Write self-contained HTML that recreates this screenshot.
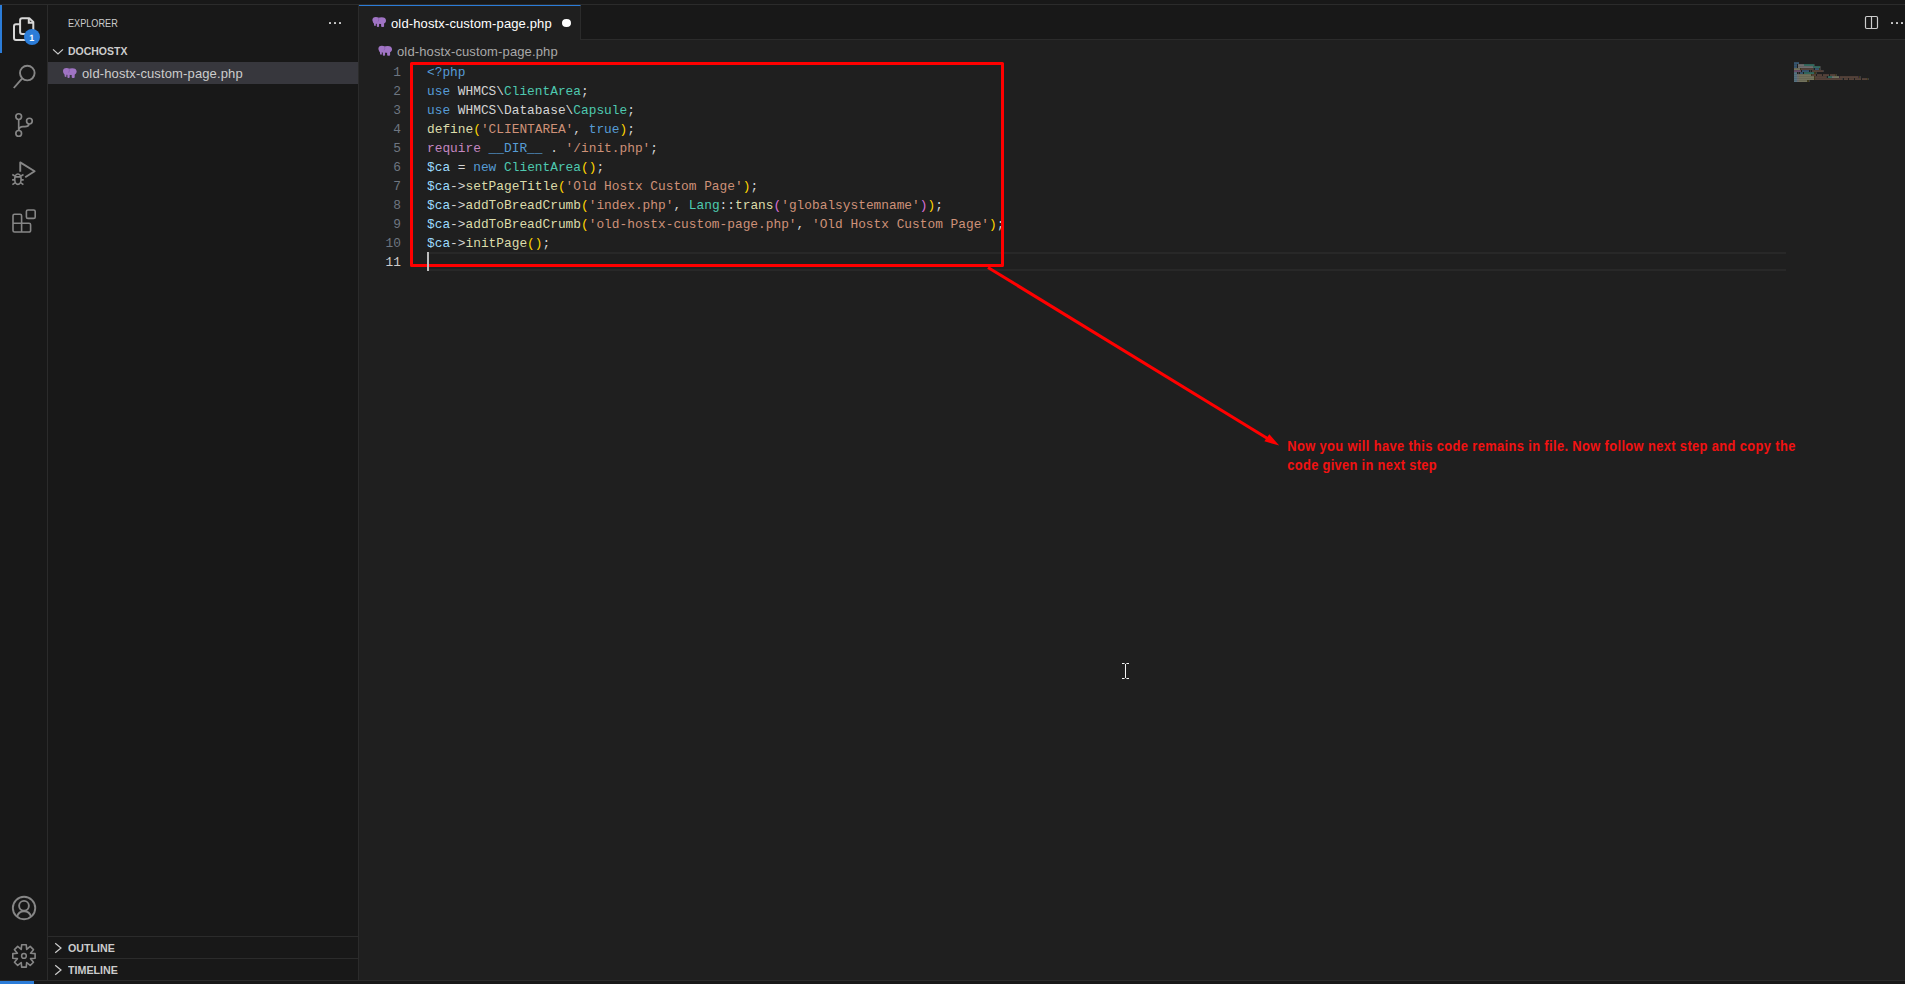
<!DOCTYPE html>
<html lang="en">
<head>
<meta charset="utf-8">
<title>old-hostx-custom-page.php - dochostx - Visual Studio Code</title>
<style>
*{box-sizing:border-box;margin:0;padding:0}
html,body{width:1905px;height:984px;overflow:hidden;background:#1f1f1f}
body{position:relative;font-family:"Liberation Sans",sans-serif;color:#ccc;font-size:13px;-webkit-font-smoothing:antialiased}
.abs{position:absolute}
#titlestrip{left:0;top:0;width:1905px;height:5px;background:#181818;border-bottom:1px solid #2b2b2b}
#activity{left:0;top:5px;width:48px;height:975px;background:#181818;border-right:1px solid #2b2b2b}
#activeind{left:0;top:5px;width:2px;height:48px;background:#2b7cd8}
#sidebar{left:48px;top:5px;width:311px;height:975px;background:#181818;border-right:1px solid #2b2b2b}
#tabbar{left:359px;top:5px;width:1546px;height:35px;background:#181818;border-bottom:1px solid #2b2b2b}
#tab{left:359px;top:5px;width:222px;height:35px;background:#1f1f1f;border-top:1px solid #2b7cd8;border-right:1px solid #2b2b2b}
#editor{left:359px;top:40px;width:1546px;height:940px;background:#1f1f1f}
#status{left:0;top:980px;width:1905px;height:4px;background:#181818;border-top:1px solid #2b2b2b}
#remote{left:0;top:981px;width:34px;height:3px;background:#2b7cd8}
.t{position:absolute;white-space:pre;line-height:1;transform-origin:0 0}
.ui13{font-size:13px;letter-spacing:0.13px}
.hdr{font-size:11px;color:#ccc}
.bold{font-weight:bold}
.ln{position:absolute;left:359px;width:42px;text-align:right;font-family:"Liberation Mono",monospace;font-size:12.83px;line-height:19px;height:19px;color:#6e7681}
.cl{position:absolute;left:427px;font-family:"Liberation Mono",monospace;font-size:12.83px;line-height:19px;height:19px;white-space:pre;color:#d4d4d4}
.k{color:#569cd6}.c{color:#c586c0}.ty{color:#4ec9b0}.f{color:#dcdcaa}.s{color:#ce9178}.v{color:#9cdcfe}.b1{color:#ffd700}.b2{color:#da70d6}
svg{position:absolute;overflow:visible}
</style>
</head>
<body>
<div class="abs" id="titlestrip"></div>
<div class="abs" id="activity"></div>
<div class="abs" id="activeind"></div>
<div class="abs" id="sidebar"></div>
<div class="abs" id="tabbar"></div>
<div class="abs" id="tab"></div>
<div class="abs" id="editor"></div>
<div class="abs" id="status"></div>
<div class="abs" id="remote"></div>


<!-- SIDEBAR CONTENT -->
<div class="t hdr" style="left:68px;top:17.7px;transform:scaleX(.83)">EXPLORER</div>
<div class="t hdr bold" style="left:68px;top:46.2px;transform:scaleX(.953)">DOCHOSTX</div>
<div class="abs" style="left:48px;top:62px;width:310px;height:22px;background:#37373d"></div>
<div class="t ui13" style="left:82px;top:67.2px;color:#ccc">old-hostx-custom-page.php</div>
<div class="abs" style="left:48px;top:936px;width:310px;height:1px;background:#2b2b2b"></div>
<div class="abs" style="left:48px;top:958px;width:310px;height:1px;background:#2b2b2b"></div>
<div class="t hdr bold" style="left:68px;top:942.7px;transform:scaleX(.969)">OUTLINE</div>
<div class="t hdr bold" style="left:68px;top:964.7px;transform:scaleX(.971)">TIMELINE</div>

<!-- TAB + BREADCRUMB -->
<div class="t ui13" style="left:391px;top:17px;color:#fff">old-hostx-custom-page.php</div>
<div class="abs" style="left:562px;top:18.7px;width:9px;height:8.5px;border-radius:50%;background:#fff"></div>
<div class="t ui13" style="left:397px;top:44.9px;color:#a9a9a9">old-hostx-custom-page.php</div>

<!-- CODE -->
<div id="code">
<div class="ln" style="top:62.8px">1</div><div class="cl" style="top:62.8px"><span class="k">&lt;?php</span></div>
<div class="ln" style="top:81.8px">2</div><div class="cl" style="top:81.8px"><span class="k">use</span> WHMCS\<span class="ty">ClientArea</span>;</div>
<div class="ln" style="top:100.8px">3</div><div class="cl" style="top:100.8px"><span class="k">use</span> WHMCS\Database\<span class="ty">Capsule</span>;</div>
<div class="ln" style="top:119.8px">4</div><div class="cl" style="top:119.8px"><span class="f">define</span><span class="b1">(</span><span class="s">'CLIENTAREA'</span>, <span class="k">true</span><span class="b1">)</span>;</div>
<div class="ln" style="top:138.8px">5</div><div class="cl" style="top:138.8px"><span class="c">require</span> <span class="k">__DIR__</span> . <span class="s">'/init.php'</span>;</div>
<div class="ln" style="top:157.8px">6</div><div class="cl" style="top:157.8px"><span class="v">$ca</span> = <span class="k">new</span> <span class="ty">ClientArea</span><span class="b1">()</span>;</div>
<div class="ln" style="top:176.8px">7</div><div class="cl" style="top:176.8px"><span class="v">$ca</span>-&gt;<span class="f">setPageTitle</span><span class="b1">(</span><span class="s">'Old Hostx Custom Page'</span><span class="b1">)</span>;</div>
<div class="ln" style="top:195.8px">8</div><div class="cl" style="top:195.8px"><span class="v">$ca</span>-&gt;<span class="f">addToBreadCrumb</span><span class="b1">(</span><span class="s">'index.php'</span>, <span class="ty">Lang</span>::<span class="f">trans</span><span class="b2">(</span><span class="s">'globalsystemname'</span><span class="b2">)</span><span class="b1">)</span>;</div>
<div class="ln" style="top:214.8px">9</div><div class="cl" style="top:214.8px"><span class="v">$ca</span>-&gt;<span class="f">addToBreadCrumb</span><span class="b1">(</span><span class="s">'old-hostx-custom-page.php'</span>, <span class="s">'Old Hostx Custom Page'</span><span class="b1">)</span>;</div>
<div class="ln" style="top:233.8px">10</div><div class="cl" style="top:233.8px"><span class="v">$ca</span>-&gt;<span class="f">initPage</span><span class="b1">()</span>;</div>
<div class="ln" style="top:252.8px;color:#ccc">11</div>
</div>
<div class="abs" style="left:427px;top:252px;width:1359px;height:19px;border-top:2px solid #282828;border-bottom:2px solid #282828"></div>

<!-- ANNOTATIONS -->
<svg id="anno" width="1905" height="984" style="left:0;top:0" viewBox="0 0 1905 984">
<rect x="411.5" y="63.5" width="591" height="202" fill="none" stroke="#ff0000" stroke-width="3" stroke-linejoin="round"/>
<line x1="988" y1="267.5" x2="1270" y2="440" stroke="#ff0000" stroke-width="3"/>
<polygon points="1279.2,445.6 1269.3,434.2 1264.4,441.3" fill="#ff0000"/>
<g transform="translate(1287.3,0) scale(0.92,1)" fill="#f21212" font-family="Liberation Sans, sans-serif" font-weight="bold" font-size="14">
<text x="0" y="451.2" textLength="552.2" lengthAdjust="spacing">Now you will have this code remains in file. Now follow next step and copy the</text>
<text x="0" y="470.2" textLength="162.3" lengthAdjust="spacing">code given in next step</text>
</g>
</svg>
<div class="abs" style="left:427px;top:252px;width:2px;height:19px;background:#bdbdbd"></div>
<!-- ACTIVITY BAR ICONS -->
<svg id="acticons" width="48" height="984" style="left:0;top:0" viewBox="0 0 48 984" fill="none" stroke-linecap="butt" stroke-linejoin="round">
<g stroke="#d7d7d7" stroke-width="2">
<path d="M22.1 18.2H29.3L33.3 21.9V31.9a2 2 0 0 1-2 2H22.1a2 2 0 0 1-2-2V20.2a2 2 0 0 1 2-2Z"/>
<path d="M28.8 18.2V22.8H33.3" stroke-linejoin="miter"/>
<path d="M20.1 24.2H16a2 2 0 0 0-2 2V37.9a2 2 0 0 0 2 2H28a2 2 0 0 0 2-2V34"/>
</g>
<circle cx="32" cy="37" r="8" fill="#2b7cd8" stroke="none"/>
<text x="31.8" y="40.6" text-anchor="middle" fill="#ffffff" stroke="none" font-family="Liberation Sans, sans-serif" font-weight="bold" font-size="9" text-rendering="geometricPrecision">1</text>
<g stroke="#868686" stroke-width="1.9">
<circle cx="27.3" cy="73.1" r="7.3"/>
<path d="M22 78.6L13.8 88"/>
<g stroke-width="1.65"><circle cx="18.7" cy="116.6" r="2.85"/>
<circle cx="18.7" cy="133.4" r="2.85"/>
<circle cx="29.4" cy="121.1" r="2.85"/>
<path d="M18.7 119.5V130.5M29 124C28.6 126.6 26.5 126.6 25 126.6H23C20.5 126.6 18.9 128 18.7 130.4"/></g>
<path d="M20.25 171.7V162.4L34.6 171.2L25.2 177.3" stroke-linejoin="round" stroke-width="1.9"/>
<g stroke-width="1.7">
<ellipse cx="17.9" cy="179.2" rx="3.2" ry="5.2"/>
<path d="M14.9 176.8H20.9M14.8 175.9L12.3 174.6M21 175.9L23.5 174.6M14.7 179.8H12.1M21.1 179.8H23.7M15.3 182.6L12.4 184.6M20.5 182.6L23.4 184.6"/>
</g>
<g stroke-width="1.6"><rect x="26.4" y="210" width="8.8" height="8.4" rx="1.5"/>
<path d="M13 215.8a1.5 1.5 0 0 1 1.5-1.5H20.1a1.5 1.5 0 0 1 1.5 1.5V223.2H29.1a1.5 1.5 0 0 1 1.5 1.5V230.5a1.5 1.5 0 0 1-1.5 1.5H14.5a1.5 1.5 0 0 1-1.5-1.5ZM13 223.2H21.6V232"/></g>
<circle cx="24.05" cy="908" r="11.2"/>
<circle cx="24" cy="905.8" r="4.9"/>
<path d="M17.1 916.6C18 913 21 911.2 24 911.2C27 911.2 30.1 913 31 916.6"/>
<path d="M21.23 949.39L21.65 944.80L26.25 944.80L26.67 949.39L30.21 946.44L33.46 949.69L30.51 953.23L35.10 953.65L35.10 958.25L30.51 958.67L33.46 962.21L30.21 965.46L26.67 962.51L26.25 967.10L21.65 967.10L21.23 962.51L17.69 965.46L14.44 962.21L17.39 958.67L12.80 958.25L12.80 953.65L17.39 953.23L14.44 949.69L17.69 946.44Z" stroke-width="1.6" stroke-linejoin="round"/>
<circle cx="23.95" cy="955.95" r="2.35" stroke-width="1.5"/>
</g>
</svg>

<!-- SMALL UI ICONS -->
<svg id="uiicons" width="1905" height="984" style="left:0;top:0" viewBox="0 0 1905 984" fill="none">
<g fill="#cccccc">
<rect x="329" y="22" width="2" height="2" rx=".5"/><rect x="334" y="22" width="2" height="2" rx=".5"/><rect x="339" y="22" width="2" height="2" rx=".5"/>
<rect x="1891" y="22" width="2" height="2" rx=".5"/><rect x="1896" y="22" width="2" height="2" rx=".5"/><rect x="1901" y="22" width="2" height="2" rx=".5"/>
</g>
<g stroke="#cccccc" stroke-width="1.2">
<path d="M53 49.4L58 53.9L63 49.4"/>
<path d="M55.2 943.2L61 948L55.2 952.8"/>
<path d="M55.2 965.2L61 970L55.2 974.8"/>
<rect x="1865.5" y="16.5" width="12" height="12" rx="1.2"/>
<path d="M1871.5 16.5V28.5"/>
</g>
<!-- elephants -->
<g fill="#a074c4">
<g id="eleph" transform="translate(63,68)">
<ellipse cx="3.5" cy="3" rx="3.5" ry="3"/>
<ellipse cx="9.2" cy="3.6" rx="4.4" ry="3.4"/>
<rect x="2.6" y="1.2" width="8" height="5.6"/>
<path d="M.5 4.2L3.2 4.6L3.5 8.6Q2.6 9.4 1.7 8.6L1.5 6.4Q.4 5.6 .5 4.2Z"/>
<rect x="4.4" y="5.5" width="2.3" height="4.5" rx=".9"/>
<rect x="8.7" y="5.5" width="3" height="4.5" rx=".9"/>
<path d="M6.5 .3L6.1 .9Q6.9 3 5.6 4.6" fill="none" stroke="#7e56a6" stroke-width=".6"/>
</g>
<use href="#eleph" x="309.4" y="-51"/>
<use href="#eleph" x="315.4" y="-22.3"/>
</g>
<!-- minimap -->
<g id="minimap" opacity=".55"><rect x="1794" y="62.3" width="5" height="1.5" fill="#569cd6"/><rect x="1794" y="64.3" width="3" height="1.5" fill="#569cd6"/><rect x="1798" y="64.3" width="6" height="1.5" fill="#d4d4d4"/><rect x="1804" y="64.3" width="10" height="1.5" fill="#4ec9b0"/><rect x="1814" y="64.3" width="1" height="1.5" fill="#d4d4d4" fill-opacity=".4"/><rect x="1794" y="66.3" width="3" height="1.5" fill="#569cd6"/><rect x="1798" y="66.3" width="15" height="1.5" fill="#d4d4d4"/><rect x="1813" y="66.3" width="7" height="1.5" fill="#4ec9b0"/><rect x="1820" y="66.3" width="1" height="1.5" fill="#d4d4d4" fill-opacity=".4"/><rect x="1794" y="68.3" width="6" height="1.5" fill="#dcdcaa"/><rect x="1800" y="68.3" width="1" height="1.5" fill="#ffd700" fill-opacity=".35"/><rect x="1801" y="68.3" width="12" height="1.5" fill="#ce9178" fill-opacity=".7"/><rect x="1813" y="68.3" width="1" height="1.5" fill="#d4d4d4" fill-opacity=".4"/><rect x="1815" y="68.3" width="4" height="1.5" fill="#569cd6"/><rect x="1819" y="68.3" width="1" height="1.5" fill="#ffd700" fill-opacity=".35"/><rect x="1820" y="68.3" width="1" height="1.5" fill="#d4d4d4" fill-opacity=".4"/><rect x="1794" y="70.3" width="7" height="1.5" fill="#c586c0"/><rect x="1802" y="70.3" width="7" height="1.5" fill="#569cd6"/><rect x="1810" y="70.3" width="1" height="1.5" fill="#d4d4d4" fill-opacity=".4"/><rect x="1812" y="70.3" width="11" height="1.5" fill="#ce9178" fill-opacity=".7"/><rect x="1823" y="70.3" width="1" height="1.5" fill="#d4d4d4" fill-opacity=".4"/><rect x="1794" y="72.3" width="3" height="1.5" fill="#9cdcfe"/><rect x="1798" y="72.3" width="1" height="1.5" fill="#d4d4d4" fill-opacity=".4"/><rect x="1800" y="72.3" width="3" height="1.5" fill="#569cd6"/><rect x="1804" y="72.3" width="10" height="1.5" fill="#4ec9b0"/><rect x="1814" y="72.3" width="2" height="1.5" fill="#ffd700" fill-opacity=".35"/><rect x="1816" y="72.3" width="1" height="1.5" fill="#d4d4d4" fill-opacity=".4"/><rect x="1794" y="74.3" width="3" height="1.5" fill="#9cdcfe"/><rect x="1797" y="74.3" width="2" height="1.5" fill="#d4d4d4"/><rect x="1799" y="74.3" width="12" height="1.5" fill="#dcdcaa"/><rect x="1811" y="74.3" width="1" height="1.5" fill="#ffd700" fill-opacity=".35"/><rect x="1812" y="74.3" width="4" height="1.5" fill="#ce9178" fill-opacity=".7"/><rect x="1817" y="74.3" width="5" height="1.5" fill="#ce9178" fill-opacity=".7"/><rect x="1823" y="74.3" width="6" height="1.5" fill="#ce9178" fill-opacity=".7"/><rect x="1830" y="74.3" width="5" height="1.5" fill="#ce9178" fill-opacity=".7"/><rect x="1835" y="74.3" width="1" height="1.5" fill="#ffd700" fill-opacity=".35"/><rect x="1836" y="74.3" width="1" height="1.5" fill="#d4d4d4" fill-opacity=".4"/><rect x="1794" y="76.3" width="3" height="1.5" fill="#9cdcfe"/><rect x="1797" y="76.3" width="2" height="1.5" fill="#d4d4d4"/><rect x="1799" y="76.3" width="15" height="1.5" fill="#dcdcaa"/><rect x="1814" y="76.3" width="1" height="1.5" fill="#ffd700" fill-opacity=".35"/><rect x="1815" y="76.3" width="11" height="1.5" fill="#ce9178" fill-opacity=".7"/><rect x="1826" y="76.3" width="1" height="1.5" fill="#d4d4d4" fill-opacity=".4"/><rect x="1828" y="76.3" width="4" height="1.5" fill="#4ec9b0"/><rect x="1832" y="76.3" width="2" height="1.5" fill="#d4d4d4"/><rect x="1834" y="76.3" width="5" height="1.5" fill="#dcdcaa"/><rect x="1839" y="76.3" width="1" height="1.5" fill="#da70d6" fill-opacity=".35"/><rect x="1840" y="76.3" width="18" height="1.5" fill="#ce9178" fill-opacity=".7"/><rect x="1858" y="76.3" width="1" height="1.5" fill="#da70d6" fill-opacity=".35"/><rect x="1859" y="76.3" width="1" height="1.5" fill="#ffd700" fill-opacity=".35"/><rect x="1860" y="76.3" width="1" height="1.5" fill="#d4d4d4" fill-opacity=".4"/><rect x="1794" y="78.3" width="3" height="1.5" fill="#9cdcfe"/><rect x="1797" y="78.3" width="2" height="1.5" fill="#d4d4d4"/><rect x="1799" y="78.3" width="15" height="1.5" fill="#dcdcaa"/><rect x="1814" y="78.3" width="1" height="1.5" fill="#ffd700" fill-opacity=".35"/><rect x="1815" y="78.3" width="27" height="1.5" fill="#ce9178" fill-opacity=".7"/><rect x="1842" y="78.3" width="1" height="1.5" fill="#d4d4d4" fill-opacity=".4"/><rect x="1844" y="78.3" width="4" height="1.5" fill="#ce9178" fill-opacity=".7"/><rect x="1849" y="78.3" width="5" height="1.5" fill="#ce9178" fill-opacity=".7"/><rect x="1855" y="78.3" width="6" height="1.5" fill="#ce9178" fill-opacity=".7"/><rect x="1862" y="78.3" width="5" height="1.5" fill="#ce9178" fill-opacity=".7"/><rect x="1867" y="78.3" width="1" height="1.5" fill="#ffd700" fill-opacity=".35"/><rect x="1868" y="78.3" width="1" height="1.5" fill="#d4d4d4" fill-opacity=".4"/><rect x="1794" y="80.3" width="3" height="1.5" fill="#9cdcfe"/><rect x="1797" y="80.3" width="2" height="1.5" fill="#d4d4d4"/><rect x="1799" y="80.3" width="8" height="1.5" fill="#dcdcaa"/><rect x="1807" y="80.3" width="2" height="1.5" fill="#ffd700" fill-opacity=".35"/><rect x="1809" y="80.3" width="1" height="1.5" fill="#d4d4d4" fill-opacity=".4"/></g>
<!-- mouse I-beam -->
<g stroke="#ffffff" stroke-width="1" opacity=".95">
<path d="M1125.5 664V678M1122 663.5H1124.6M1126.4 663.5H1129M1122 678.5H1124.6M1126.4 678.5H1129"/>
</g>
</svg>

</body>
</html>
